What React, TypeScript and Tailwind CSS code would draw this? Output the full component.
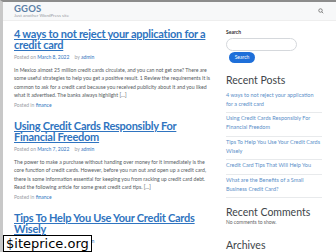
import React from "react";

interface Post {
  title: string;
  date: string;
  excerpt: string;
}

const posts: Post[] = [
  {
    title: "4 ways to not reject your application for a credit card",
    date: "March 8, 2022",
    excerpt:
      "In Mexico almost 25 million credit cards circulate, and you can not get one? There are some useful strategies to help you get a positive result. 1 Review the requirements It is common to ask for a credit card because you received publicity about it and you liked what it advertised. The banks always highlight […]",
  },
  {
    title: "Using Credit Cards Responsibly For Financial Freedom",
    date: "March 7, 2022",
    excerpt:
      "The power to make a purchase without handing over money for it immediately is the core function of credit cards. However, before you run out and open up a credit card, there is some information essential for keeping you from racking up credit card debt. Read the following article for some great credit card tips. […]",
  },
  {
    title: "Tips To Help You Use Your Credit Cards Wisely",
    date: "March 6, 2022",
    excerpt:
      "Credit cards can be a great way to build up their good credit, and make their purchases easier.",
  },
];

const recent = [
  "4 ways to not reject your application for a credit card",
  "Using Credit Cards Responsibly For Financial Freedom",
  "Tips To Help You Use Your Credit Cards Wisely",
  "Credit Card Tips That Will Help You",
  "What are the Benefits of a Small Business Credit Card?",
];

const font = { fontFamily: "Lato, 'Open Sans', sans-serif" };

export default function App() {
  return (
    <div
      className="relative w-[336px] h-[252px] overflow-hidden bg-white border-t-2 border-t-[#8c8c8c] border-l-[3px] border-l-[#c8c8c8]"
      style={font}
    >
      {/* Header */}
      <div className="h-[19px] bg-[#f7f8f9] flex items-center justify-between pl-[11px] pr-[12px] border-b border-[#eeeeee]">
        <div className="flex flex-col leading-none">
          <span className="text-[9.5px] font-bold text-[#5b7fa6] tracking-[0.2px]">GGOS</span>
          <span className="text-[4.5px] text-[#9aa0a6] mt-[1px]">Just another WordPress site</span>
        </div>
        <svg width="6" height="6" viewBox="0 0 24 24" fill="none" stroke="#666" strokeWidth="3">
          <circle cx="10" cy="10" r="7" />
          <path d="M15 15l6 6" />
        </svg>
      </div>

      <div className="flex gap-[11px] pl-[11px] pr-[14px] pt-[6.5px]">
        {/* Main */}
        <div className="w-[201px] flex flex-col">
          {posts.map((p, i) => (
            <div key={i} className="mb-[11.5px]">
              <h2 className="text-[11px] font-bold leading-[11px] tracking-[-0.25px] text-[#2f74c0] underline decoration-[1px] underline-offset-[1px]">
                {p.title}
              </h2>
              <p className="text-[5px] leading-[6px] text-[#9aa0a6] mt-[4.5px]">
                Posted on <span className="text-[#2f74c0]">{p.date}</span>
                <span className="ml-[5px]">by </span>
                <span className="text-[#2f74c0]">admin</span>
              </p>
              <p className="text-[5.2px] leading-[8.3px] text-[#555b61] mt-[6px]">{p.excerpt}</p>
              <p className="text-[5px] leading-[6px] text-[#9aa0a6] mt-[3px]">
                Posted in <span className="text-[#2f74c0]">finance</span>
              </p>
            </div>
          ))}
        </div>

        {/* Sidebar */}
        <div className="w-[96px] flex flex-col">
          <span className="text-[5px] leading-[6px] font-bold text-[#333] mt-[1.5px]">Search</span>
          <div className="w-[71px] h-[13px] rounded-full border border-[#d5d8dc] mt-[3px]" />
          <button className="w-[26px] h-[11px] rounded-full bg-[#1e6fd9] text-white text-[5px] ml-[3px] mt-[1px]">
            Search
          </button>
          <h3 className="text-[10.5px] text-[#404549] mt-[11.5px] leading-[11px]">Recent Posts</h3>
          <ul className="mt-[4px]">
            {recent.map((r, i) => (
              <li key={i} className="border-b border-[#e8eaec] pb-[3.5px] pt-[1px] pr-[1px]">
                <span className="text-[5.5px] leading-[9px] text-[#5b8fc9] block">{r}</span>
              </li>
            ))}
          </ul>
          <h3 className="text-[10.5px] text-[#404549] mt-[8.5px] leading-[11px]">Recent Comments</h3>
          <span className="text-[5px] leading-[6px] text-[#666] mt-[1.5px]">No comments to show.</span>
          <h3 className="text-[10.5px] text-[#404549] mt-[14.5px] leading-[11px]">Archives</h3>
        </div>
      </div>

      {/* watermark */}
      <div
        className="absolute left-0 bottom-0 bg-white px-[2px] text-[13px] leading-[15px] text-black border border-black"
        style={{ fontFamily: "'DejaVu Sans', sans-serif" }}
      >
        $iteprice.org
      </div>
    </div>
  );
}
